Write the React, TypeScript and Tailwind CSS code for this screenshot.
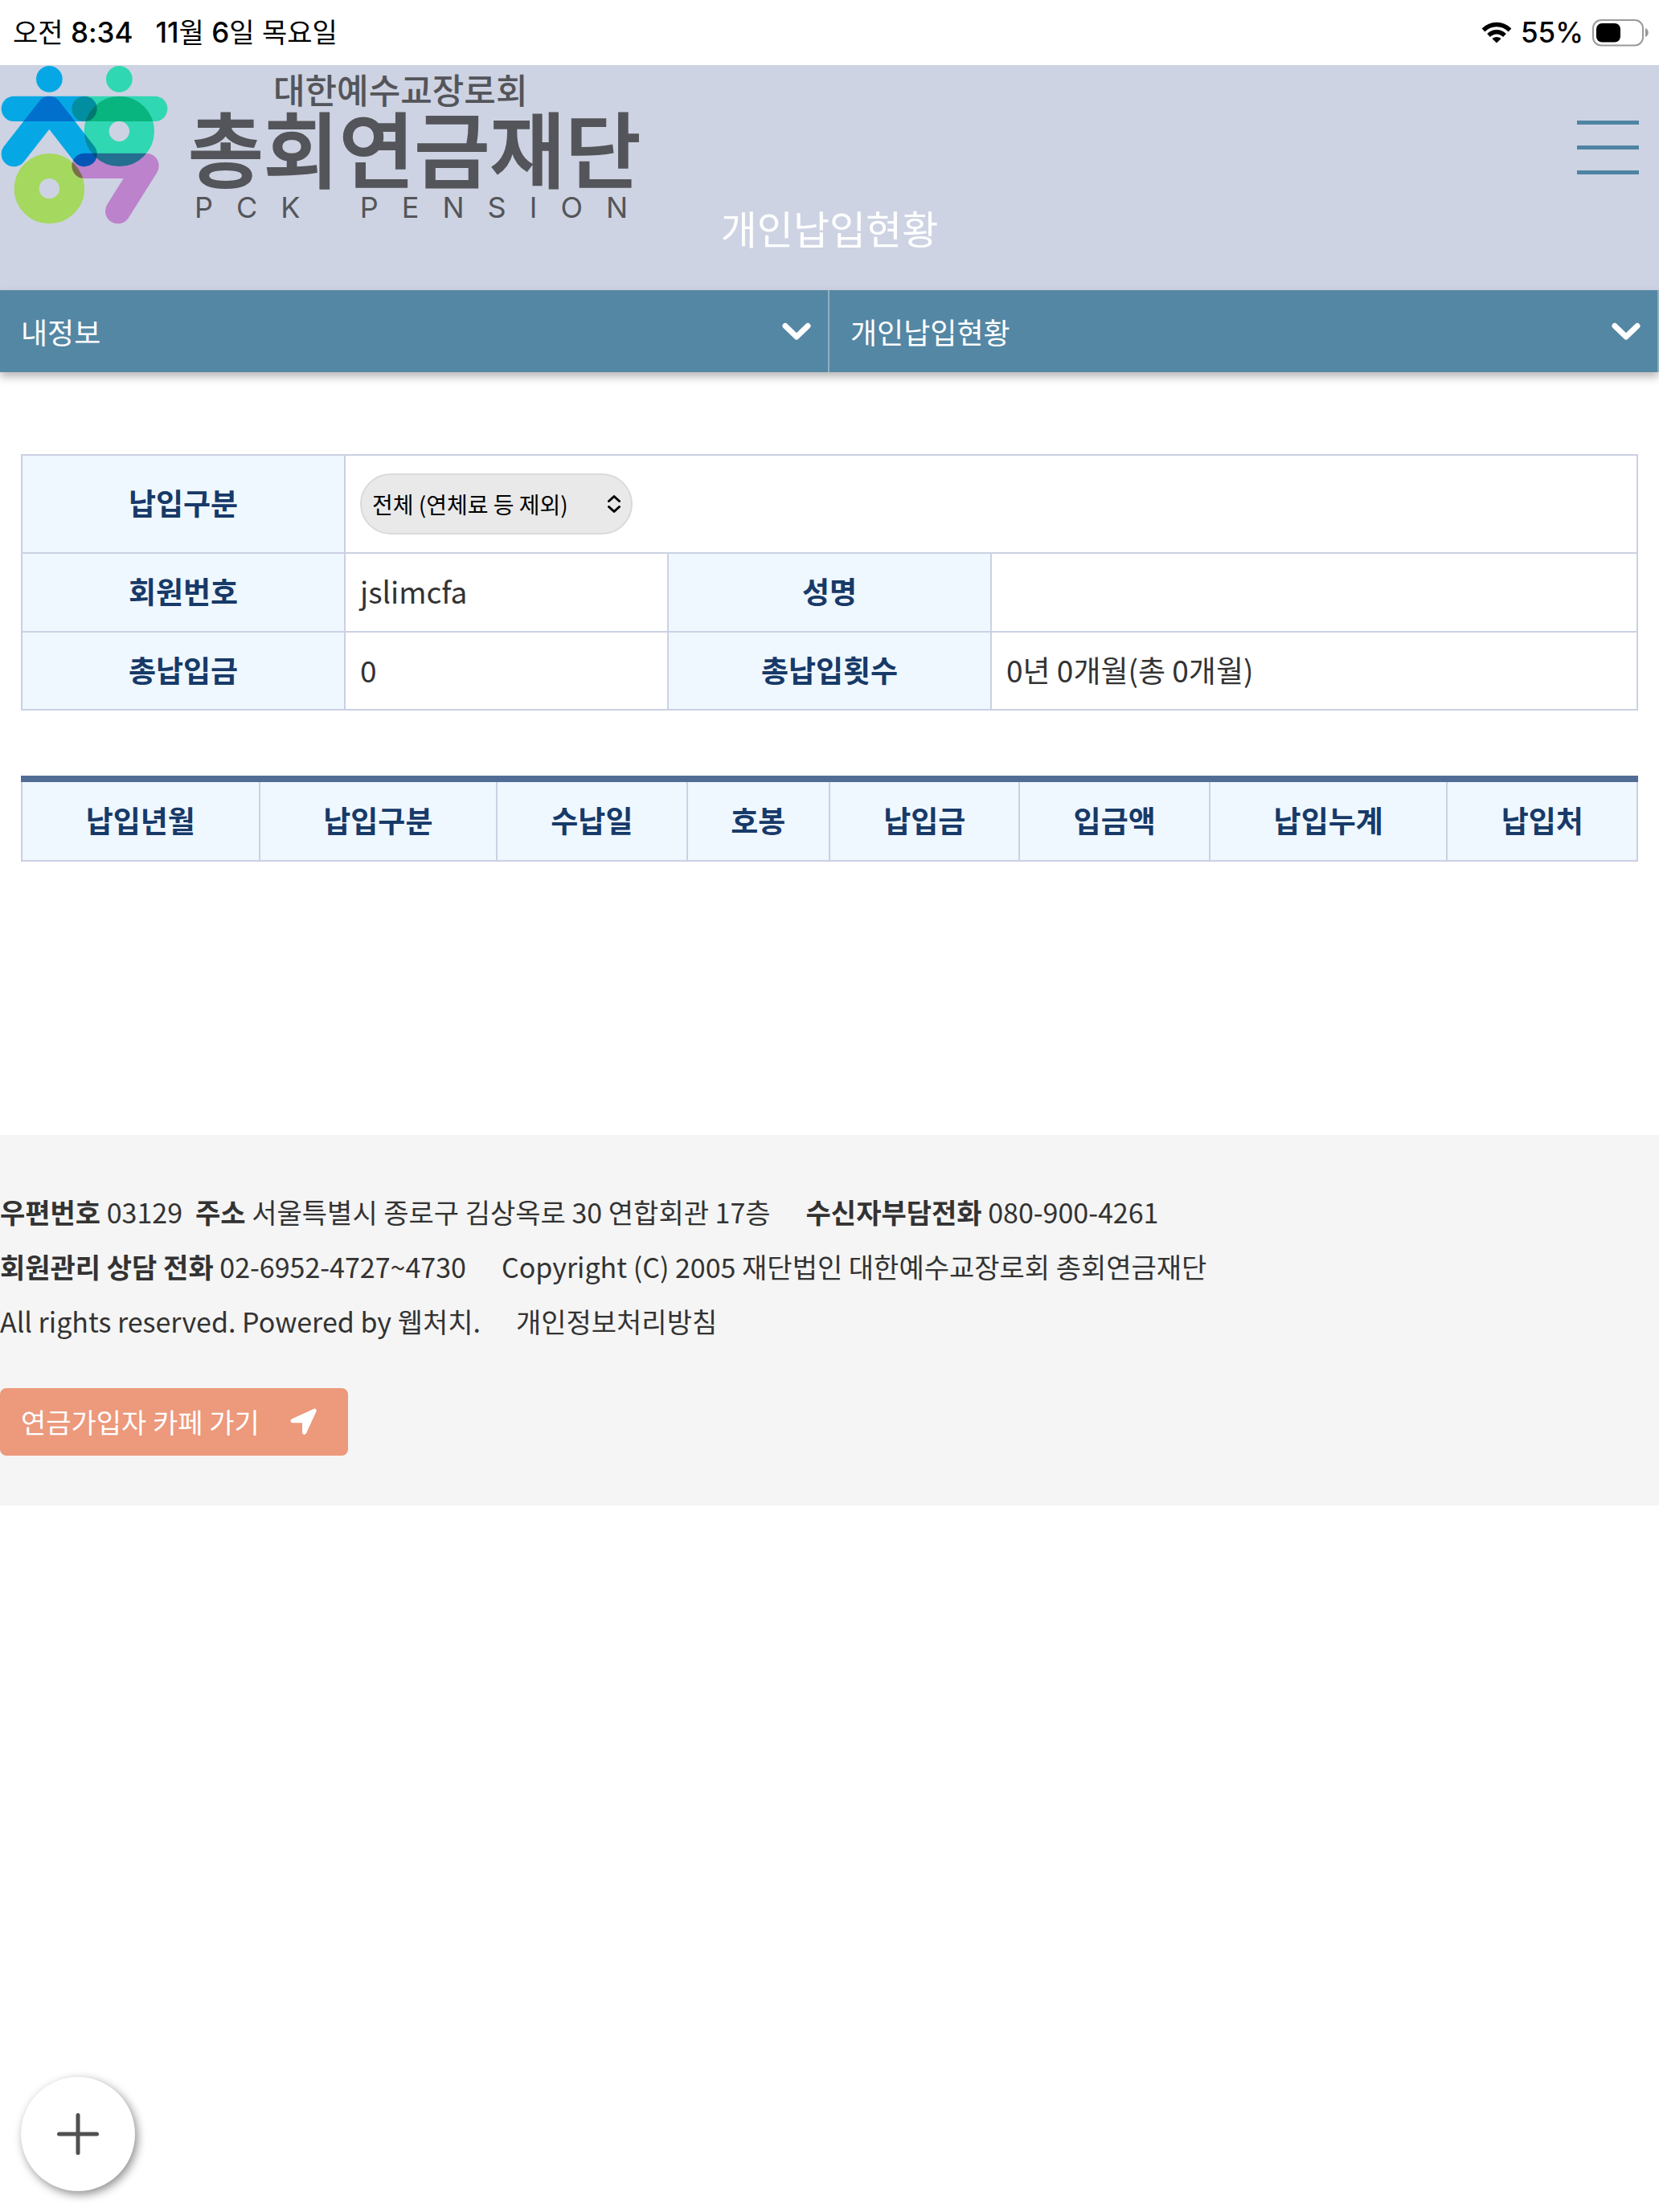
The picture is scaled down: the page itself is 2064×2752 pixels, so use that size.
import type { ReactNode } from "react";

const infoHead =
  "border-2 border-[#cbd1e3] bg-[#eff7ff] pb-1 text-center font-bold text-[#173a68]";
const infoCell = "border-2 border-[#cbd1e3] px-[18px] pb-1 text-left text-[#333333]";

const columns: { label: string; width: string }[] = [
  { label: "납입년월", width: "w-[15%]" },
  { label: "납입구분", width: "w-[15%]" },
  { label: "수납일", width: "w-[12%]" },
  { label: "호봉", width: "w-[9%]" },
  { label: "납입금", width: "w-[12%]" },
  { label: "입금액", width: "w-[12%]" },
  { label: "납입누계", width: "w-[15%]" },
  { label: "납입처", width: "w-[12%]" },
];

function WifiIcon() {
  return (
    <svg className="h-[28px] w-[38px]" viewBox="0 0 38 28" fill="none" stroke="#000" aria-hidden="true">
      <path d="M2.500 10.500 C12 1.200 26 1.200 35.500 10.500" strokeWidth="5.400" />
      <path d="M9 17 C15 11.300 23 11.300 29 17" strokeWidth="5.400" />
      <path d="M19 26.600 L13.400 21 C16.600 18.200 21.400 18.200 24.600 21 Z" fill="#000" stroke="none" />
    </svg>
  );
}

function BatteryIcon() {
  return (
    <svg className="h-[34px] w-[71px]" viewBox="0 0 71 34" fill="none" aria-hidden="true">
      <rect x="1" y="1" width="62" height="31.500" rx="10" stroke="#9a9a9a" strokeWidth="2" />
      <rect x="5" y="5" width="30" height="23.500" rx="7" fill="#000" />
      <path d="M66 11 C71 12.500 71 20.500 66 22 Z" fill="#9a9a9a" />
    </svg>
  );
}

function Hangul({ children }: { children: ReactNode }) {
  return <span className="text-[34px] font-normal">{children}</span>;
}

function StatusBar() {
  return (
    <div className="flex h-[81px] items-center justify-between bg-white pl-4 pr-3 font-[Inter,'Noto_Sans_CJK_KR',sans-serif] text-[35px] font-medium leading-none text-black">
      <div className="flex gap-7">
        <span>
          <Hangul>오전</Hangul> 8:34
        </span>
        <span>
          11<Hangul>월</Hangul> 6<Hangul>일 목요일</Hangul>
        </span>
      </div>
      <div className="flex items-center gap-[11px]">
        <WifiIcon />
        <span>55%</span>
        <BatteryIcon />
      </div>
    </div>
  );
}

function LogoMark() {
  return (
    <svg className="isolate h-[200px] w-[210px] shrink-0" viewBox="0 245 630 600" fill="none" aria-hidden="true">
      <circle className="mix-blend-multiply" cx="184" cy="297" r="49" fill="#05a8e4" />
      <rect className="mix-blend-multiply" x="5" y="361" width="357" height="94" rx="47" fill="#05a8e4" />
      <path
        className="mix-blend-multiply"
        d="M52 577 L184 408 L315 577"
        stroke="#05a8e4"
        strokeWidth="94"
        strokeLinecap="round"
        strokeLinejoin="round"
      />
      <circle className="mix-blend-multiply" cx="445" cy="297" r="49" fill="#30d7b3" />
      <rect className="mix-blend-multiply" x="268" y="361" width="357" height="94" rx="47" fill="#30d7b3" />
      <circle className="mix-blend-multiply" cx="445" cy="492" r="84.500" stroke="#30d7b3" strokeWidth="93" />
      <circle className="mix-blend-multiply" cx="184" cy="706" r="84.500" stroke="#a5d85e" strokeWidth="93" />
      <path
        className="mix-blend-multiply"
        d="M315 621 L546 621 L440 790"
        stroke="#bc82cc"
        strokeWidth="94"
        strokeLinecap="round"
        strokeLinejoin="round"
      />
    </svg>
  );
}

function Spread({ word }: { word: string }) {
  return (
    <span className="flex gap-[29px]">
      {word.split("").map((letter, i) => (
        <span key={i}>{letter}</span>
      ))}
    </span>
  );
}

function Logo() {
  return (
    <a href="#" className="flex items-start text-[#54555a]">
      <LogoMark />
      <span className="flex flex-col pl-6 pt-2">
        <span className="pl-[106px] text-[43px] font-medium leading-[42px]">대한예수교장로회</span>
        <span className="text-[102px] font-medium leading-[102px] [-webkit-text-stroke:2px_#54555a]">
          총회연금재단
        </span>
        <span className="flex w-full justify-between pl-2 pr-4 pt-1 font-[Inter,sans-serif] text-[36px] leading-[42px]">
          <Spread word="PCK" />
          <Spread word="PENSION" />
        </span>
      </span>
    </a>
  );
}

function Header() {
  return (
    <header className="grid h-[280px] grid-cols-[1fr_auto_1fr] bg-[#cdd3e2]">
      <Logo />
      <h1 className="self-end pb-[42px] text-[49px] leading-[72px] text-white">개인납입현황</h1>
      <button
        type="button"
        aria-label="메뉴"
        className="mr-[25px] mt-[69px] flex h-[67px] w-[77px] flex-col justify-between justify-self-end"
      >
        <span className="h-[5px] w-full bg-[#4f84a3]" />
        <span className="h-[5px] w-full bg-[#4f84a3]" />
        <span className="h-[5px] w-full bg-[#4f84a3]" />
      </button>
    </header>
  );
}

function NavButton({ children }: { children: ReactNode }) {
  return (
    <button
      type="button"
      className="flex h-[102px] items-center justify-between border-r-2 border-[#8fb0c3] pl-[26px] pr-[21px] text-[36px] text-white"
    >
      <span>{children}</span>
      <svg className="h-[22px] w-[36px]" viewBox="0 0 36 22" fill="none" aria-hidden="true">
        <path
          d="M4 4.500 L18 18 L32 4.500"
          stroke="#fff"
          strokeWidth="7"
          strokeLinecap="round"
          strokeLinejoin="round"
        />
      </svg>
    </button>
  );
}

function InfoTable() {
  return (
    <table className="w-full table-fixed border-collapse text-[37px] leading-[54px]">
      <colgroup>
        <col className="w-[20%]" />
        <col className="w-[20%]" />
        <col className="w-[20%]" />
        <col className="w-[40%]" />
      </colgroup>
      <tbody>
        <tr className="h-[122px]">
          <th scope="row" className={infoHead}>
            <label htmlFor="payment-type">납입구분</label>
          </th>
          <td colSpan={3} className={infoCell}>
            <div className="relative mt-1 h-[76px] w-[339px]">
              <select
                id="payment-type"
                className="h-full w-full appearance-none rounded-full border-2 border-[#dadada] bg-[#e9e9e9] pl-[13px] pr-14 text-[28px] text-black"
              >
                <option>전체 (연체료 등 제외)</option>
              </select>
              <svg
                className="pointer-events-none absolute right-[13px] top-[26px] h-[24px] w-[20px]"
                viewBox="0 0 20 24"
                fill="none"
                stroke="#000"
                strokeWidth="3"
                strokeLinecap="round"
                strokeLinejoin="round"
                aria-hidden="true"
              >
                <path d="M3.500 8.500 L10 2.500 L16.500 8.500" />
                <path d="M3.500 15.500 L10 21.500 L16.500 15.500" />
              </svg>
            </div>
          </td>
        </tr>
        <tr className="h-[98px]">
          <th scope="row" className={infoHead}>회원번호</th>
          <td className={infoCell}>jslimcfa</td>
          <th scope="row" className={infoHead}>성명</th>
          <td className={infoCell} />
        </tr>
        <tr className="h-[97px]">
          <th scope="row" className={infoHead}>총납입금</th>
          <td className={infoCell}>0</td>
          <th scope="row" className={infoHead}>총납입횟수</th>
          <td className={infoCell}>0년 0개월(총 0개월)</td>
        </tr>
      </tbody>
    </table>
  );
}

function PaymentTable() {
  return (
    <table className="w-full table-fixed border-collapse border-t-8 border-[#526d95] text-[37px] leading-[54px]">
      <thead>
        <tr className="h-[102px]">
          {columns.map((c) => (
            <th
              key={c.label}
              scope="col"
              className={`${c.width} border-x-2 border-b-2 border-x-[#cbd1e3] border-b-[#cbd1e3] bg-[#eff7ff] pb-1 font-bold text-[#173a68]`}
            >
              {c.label}
            </th>
          ))}
        </tr>
      </thead>
    </table>
  );
}

function Footer() {
  return (
    <footer className="mt-[340px] bg-[#f5f5f5] pb-[62px] pt-[62px] text-[34px] leading-[68px] text-[#333333]">
      <p>
        <span className="mr-4">
          <strong>우편번호</strong> 03129
        </span>
        <span className="mr-11">
          <strong>주소</strong> 서울특별시 종로구 김상옥로 30 연합회관 17층
        </span>
        <span>
          <strong>수신자부담전화</strong> 080-900-4261
        </span>
      </p>
      <p>
        <span className="mr-11">
          <strong>회원관리 상담 전화</strong> 02-6952-4727~4730
        </span>
        <span>Copyright (C) 2005 재단법인 대한예수교장로회 총회연금재단</span>
      </p>
      <p>
        <span className="mr-11">All rights reserved. Powered by 웹처치.</span>
        <a href="#">개인정보처리방침</a>
      </p>
      <a
        href="#"
        className="mt-[49px] inline-flex h-[84px] items-center gap-[38px] rounded-lg bg-[#ec997c] pl-[26px] pr-[38px] text-white"
      >
        연금가입자 카페 가기
        <svg className="h-[34px] w-[34px]" viewBox="0 0 34 34" fill="#fff" aria-hidden="true">
          <path d="M29.500 0.800 L2.300 13.200 C-0.600 14.600 0.300 18.300 3.200 18.300 L15 18.300 L15 30 C15 33.200 18.800 33.800 20.100 31 L32.500 4 C33.400 1.800 31.600 0 29.500 0.800 Z" />
        </svg>
      </a>
    </footer>
  );
}

export default function App() {
  return (
    <div className="min-h-screen bg-white font-['Noto_Sans_CJK_KR',sans-serif]">
      <StatusBar />
      <Header />
      <nav className="grid grid-cols-2 bg-[#5487a4] shadow-[0_6px_10px_rgba(0,0,0,0.28)]">
        <NavButton>내정보</NavButton>
        <NavButton>개인납입현황</NavButton>
      </nav>
      <main className="flex flex-col gap-[81px] px-[26px] pt-[102px]">
        <InfoTable />
        <PaymentTable />
      </main>
      <Footer />
      <button
        type="button"
        aria-label="추가"
        className="fixed bottom-[26px] left-[26px] flex size-[142px] items-center justify-center rounded-full bg-white shadow-[3px_4px_12px_rgba(0,0,0,0.45)]"
      >
        <svg className="size-[54px]" viewBox="0 0 54 54" stroke="#505050" strokeWidth="5" strokeLinecap="round" aria-hidden="true">
          <path d="M27 3.500 V50.500 M3.500 27 H50.500" />
        </svg>
      </button>
    </div>
  );
}
